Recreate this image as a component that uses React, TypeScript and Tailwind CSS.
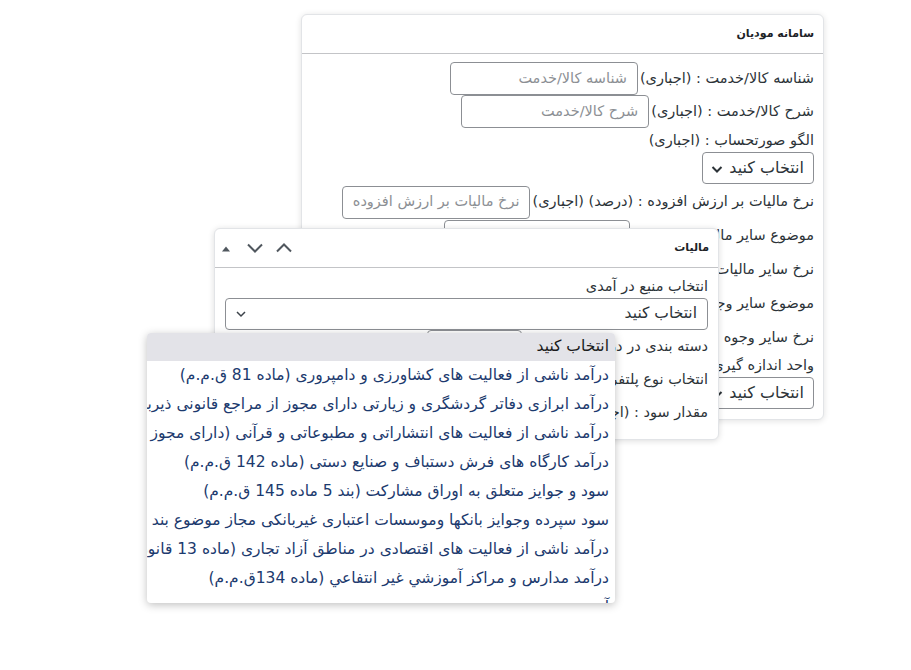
import React from 'react'

const font = { fontFamily: '"DejaVu Sans", "Noto Sans", sans-serif' }

const Input = ({ placeholder, width }: { placeholder: string; width: string }) => (
  <div className={`${width} h-[33px] border border-[#8c8f94] rounded-[4px] bg-white flex items-center px-[10px] text-[14.5px] text-[#8c8f94] whitespace-nowrap overflow-hidden`}>
    {placeholder}
  </div>
)

const SmallSelect = () => (
  <div className="w-[112px] h-[32px] border border-[#8c8f94] rounded-[4px] bg-white flex items-center gap-[6px] pr-[9px] pl-[6px] text-[16px] text-[#2c3338]">
    <span>انتخاب کنید</span>
    <svg width="12" height="12" viewBox="0 0 12 12" className="mt-[2px]">
      <path d="M1.5 4 L6 8.5 L10.5 4" fill="none" stroke="#2c3338" strokeWidth="2" />
    </svg>
  </div>
)

const Row = ({ label, children, h = 'h-[34px]' }: { label: string; children?: React.ReactNode; h?: string }) => (
  <div className={`${h} flex items-center gap-[2px] whitespace-nowrap`}>
    <span className="text-[14.5px] text-[#2c3338]">{label}</span>
    {children}
  </div>
)

const BackCard = () => (
  <div dir="rtl" className="absolute left-[301px] top-[14px] w-[523px] h-[406px] bg-white border border-[#e2e4e7] rounded-[6px] shadow-[0_1px_6px_rgba(0,0,0,0.12)] overflow-hidden">
    <div className="h-[39px] border-b border-[#c3c4c7] flex items-center px-[9px] text-[11px] font-bold text-[#1d2327]">سامانه مودیان</div>
    <div className="px-[9px] pt-[8px]">
      <Row label="شناسه کالا/خدمت : (اجباری)" h="h-[33px]">
        <Input placeholder="شناسه کالا/خدمت" width="w-[188px]" />
      </Row>
      <Row label="شرح کالا/خدمت : (اجباری)" h="h-[33px]">
        <Input placeholder="شرح کالا/خدمت" width="w-[188px]" />
      </Row>
      <div className="mt-[2px] h-[22px] flex items-center text-[14.5px] text-[#2c3338]">الگو صورتحساب : (اجباری)</div>
      <SmallSelect />
      <div className="mt-[1px]">
        <Row label="نرخ مالیات بر ارزش افزوده : (درصد) (اجباری)">
          <Input placeholder="نرخ مالیات بر ارزش افزوده" width="w-[188px]" />
        </Row>
        <Row label="موضوع سایر مالیات و عوارض">
          <Input placeholder="موضوع سایر مالیات و عوارض" width="w-[186px]" />
        </Row>
        <Row label="نرخ سایر مالیات و عوارض : (اجباری)">
          <Input placeholder="نرخ سایر مالیات و عوارض" width="w-[186px]" />
        </Row>
        <Row label="موضوع سایر وجوه قانونی : (اجباری)">
          <Input placeholder="موضوع سایر وجوه قانونی" width="w-[186px]" />
        </Row>
        <Row label="نرخ سایر وجوه قانونی : (اجباری)">
          <Input placeholder="نرخ سایر وجوه قانونی" width="w-[186px]" />
        </Row>
      </div>
      <div className="h-[22px] flex items-center text-[14.5px] text-[#2c3338]">واحد اندازه گیری کالا : (اجباری)</div>
      <SmallSelect />
    </div>
  </div>
)

const FrontCard = () => (
  <div dir="rtl" className="absolute left-[214px] top-[228px] w-[505px] h-[212px] bg-white border border-[#e2e4e7] rounded-[6px] shadow-[0_1px_6px_rgba(0,0,0,0.14)] overflow-hidden">
    <div className="h-[39px] border-b border-[#c3c4c7] flex items-center justify-between pr-[9px] pl-[7px]">
      <span className="text-[11px] font-bold text-[#1d2327]">مالیات</span>
      <div dir="ltr" className="flex items-center">
        <svg width="8" height="24" viewBox="0 0 8 24">
          <path d="M0 15.5 L4 10.5 L8 15.5 Z" fill="#50575e" />
        </svg>
        <svg width="16" height="24" viewBox="0 0 16 24" className="ml-[17px]">
          <path d="M1 8.5 L8 15.5 L15 8.5" fill="none" stroke="#50575e" strokeWidth="2" />
        </svg>
        <svg width="16" height="24" viewBox="0 0 16 24" className="ml-[13px]">
          <path d="M1 15.5 L8 8.5 L15 15.5" fill="none" stroke="#50575e" strokeWidth="2" />
        </svg>
      </div>
    </div>
    <div className="px-[10px] pt-[9px]">
      <div className="h-[20px] flex items-center text-[14.5px] text-[#2c3338]">انتخاب منبع در آمدی</div>
      <div className="mt-[1px] h-[32px] border border-[#8c8f94] rounded-[4px] bg-white flex items-center justify-between pr-[10px] pl-[9px] text-[15.5px] text-[#2c3338]">
        <span>انتخاب کنید</span>
        <svg width="12" height="12" viewBox="0 0 12 12">
          <path d="M2 4 L6 8 L10 4" fill="none" stroke="#3c434a" strokeWidth="1.5" />
        </svg>
      </div>
      <Row label="دسته بندی در درآمد : (اجباری)" h="h-[33px]">
        <div className="w-[95px] h-[33px] border border-[#8c8f94] rounded-[4px]" />
      </Row>
      <Row label="انتخاب نوع پلتفرم : (اجباری)" h="h-[33px]">
        <div className="w-[95px] h-[30px] border border-[#8c8f94] rounded-[4px]" />
      </Row>
      <Row label="مقدار سود : (اجباری)" h="h-[33px]">
        <div className="w-[188px] h-[30px] border border-[#8c8f94] rounded-[4px]" />
      </Row>
    </div>
  </div>
)

const options = [
  'درآمد ناشی از فعالیت های کشاورزی و دامپروری (ماده 81 ق.م.م)',
  'درآمد ابرازی دفاتر گردشگری و زیارتی دارای مجوز از مراجع قانونی ذیربط از محل گردشگری',
  'درآمد ناشی از فعالیت های انتشاراتی و مطبوعاتی و قرآنی (دارای مجوز از وزارت فرهنگ)',
  'درآمد کارگاه های فرش دستباف و صنایع دستی (ماده 142 ق.م.م)',
  'سود و جوایز متعلق به اوراق مشارکت (بند 5 ماده 145 ق.م.م)',
  'سود سپرده وجوایز بانکها وموسسات اعتباری غیربانکی مجاز موضوع بند د ماده 145',
  'درآمد ناشی از فعالیت های اقتصادی در مناطق آزاد تجاری (ماده 13 قانون چگونگی اداره)',
  'درآمد مدارس و مراکز آموزشي غير انتفاعي (ماده 134ق.م.م)',
  'آ',
]

const Dropdown = () => (
  <div dir="rtl" className="absolute left-[147px] top-[333px] w-[468px] h-[270px] bg-white rounded-[4px] shadow-[0_2px_8px_rgba(0,0,0,0.25)] overflow-hidden">
    <div className="h-[28px] bg-[#e3e3e8] flex items-center pr-[6px] text-[15.5px] text-[#1a1a1a] whitespace-nowrap">انتخاب کنید</div>
    {options.map((o) => (
      <div key={o} className="h-[29px] flex items-center pr-[6px] text-[15.5px] text-[#1c3a6e] whitespace-nowrap">
        {o}
      </div>
    ))}
  </div>
)

export default function App() {
  return (
    <div style={font} className="relative w-[911px] h-[670px] bg-white overflow-hidden">
      <BackCard />
      <FrontCard />
      <Dropdown />
    </div>
  )
}
